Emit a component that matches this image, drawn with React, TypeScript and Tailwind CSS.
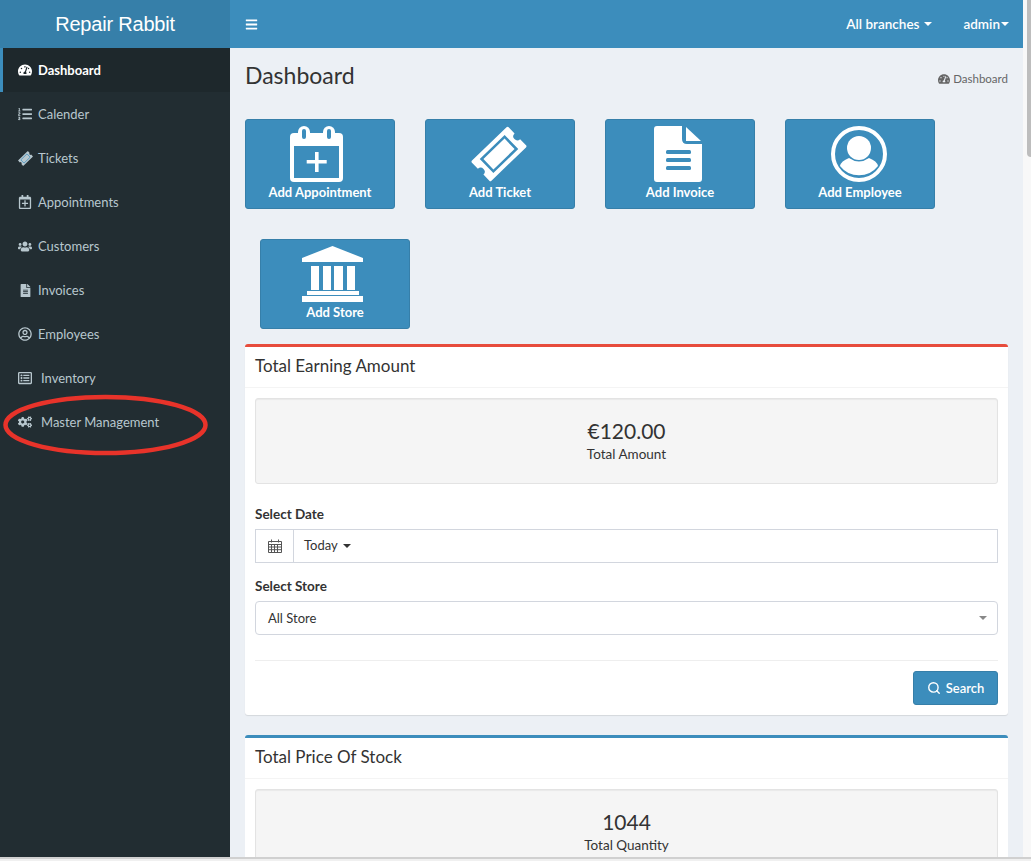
import type { ReactNode } from 'react'
import { FaBars, FaCogs, FaFileAlt, FaListOl, FaRegCalendarPlus, FaRegListAlt, FaRegUserCircle, FaTachometerAlt, FaUsers } from 'react-icons/fa'
import { Search } from 'lucide-react'

function TicketIcon({ className }: { className?: string }) {
  return (
    <svg viewBox="0 0 56 56" className={className}>
      <g transform="translate(28 28) rotate(-44)">
        <path
          fill="currentColor"
          d="M-24 -14 H24 Q25.5 -14 25.5 -12.5 V-4 A4 4 0 0 0 25.5 4 V12.5 Q25.5 14 24 14 H-24 Q-25.5 14 -25.5 12.5 V4 A4 4 0 0 0 -25.5 -4 V-12.5 Q-25.5 -14 -24 -14 Z"
        />
        <rect x="-16" y="-8.5" width="32" height="17" fill="none" stroke="#3c8dbc" strokeWidth="2.6" />
      </g>
    </svg>
  )
}

function CalendarPlusIcon() {
  return (
    <svg viewBox="0 0 53 56" className="mr-2 h-14 w-[53px] text-white">
      <path fill="currentColor" d="M4 7 H49 Q53 7 53 11 V52 Q53 56 49 56 H4 Q0 56 0 52 V11 Q0 7 4 7 Z" />
      <rect x="4" y="20" width="45" height="32" fill="#3c8dbc" />
      <rect x="8" y="0" width="12" height="15" rx="6" fill="currentColor" />
      <rect x="33" y="0" width="12" height="15" rx="6" fill="currentColor" />
      <rect x="12" y="3" width="4" height="10" rx="2" fill="#3c8dbc" />
      <rect x="37" y="3" width="4" height="10" rx="2" fill="#3c8dbc" />
      <path fill="currentColor" d="M25 26 H28.6 V34 H36.7 V37.6 H28.6 V46 H25 V37.6 H16.7 V34 H25 Z" />
    </svg>
  )
}

function InvoiceIcon() {
  return (
    <svg viewBox="0 0 49 56" className="mr-1 h-14 w-[49px] text-white">
      <path fill="currentColor" d="M3 0 H28 V13 Q28 18 33 18 H48 V53 Q48 56 45 56 H3 Q0 56 0 53 V3 Q0 0 3 0 Z" />
      <path fill="currentColor" d="M32 1 L47 15 H32 Z" />
      <rect x="12" y="24" width="25" height="4" rx="1.5" fill="#3c8dbc" />
      <rect x="12" y="32" width="25" height="4" rx="1.5" fill="#3c8dbc" />
      <rect x="12" y="40" width="25" height="4" rx="1.5" fill="#3c8dbc" />
    </svg>
  )
}

function EmployeeIcon() {
  return (
    <svg viewBox="0 0 56 56" className="mr-[2px] h-14 w-14 text-white">
      <circle cx="28" cy="28" r="26" fill="none" stroke="currentColor" strokeWidth="4" />
      <circle cx="28" cy="22" r="12" fill="currentColor" />
      <path fill="currentColor" d="M9 40 Q10 35 18 32 Q28 39 38 32 Q46 35 47 40 A24 24 0 0 1 9 40 Z" />
    </svg>
  )
}

function BankIcon() {
  return (
    <svg viewBox="0 0 61 56" className="mr-[6px] h-14 w-[61px] text-white">
      <path
        fill="currentColor"
        d="M30.5 0 L61 12 V16 H0 V12 Z M9 20 H17 V44 H9 Z M21 20 H29 V44 H21 Z M32 20 H41 V44 H32 Z M45 20 H53 V44 H45 Z M5 45 H57 V49 H5 Z M0 50 H61 V56 H0 Z"
      />
    </svg>
  )
}

function Caret({ className }: { className?: string }) {
  return <span className={`inline-block h-0 w-0 border-x-4 border-t-4 border-x-transparent border-t-current ${className ?? ''}`} />
}

function QuickAction({ icon, label }: { icon: ReactNode; label: string }) {
  return (
    <button className="flex h-[90px] w-[150px] flex-col items-center rounded-[3px] border border-[#367fa9] bg-[#3c8dbc] pt-[6px] text-[13px] font-bold leading-5 text-white">
      {icon}
      <span>{label}</span>
    </button>
  )
}

function NavItem({ icon, label, active, gap }: { icon: ReactNode; label: string; active?: boolean; gap?: boolean }) {
  return (
    <div
      className={`flex h-11 items-center border-l-[3px] pl-[15px] text-[13px] ${
        active ? 'border-[#3c8dbc] bg-[#1e282c] font-bold text-white' : 'border-transparent text-[#b8c7ce]'
      }`}
    >
      <span className="flex w-[14px] justify-center">{icon}</span>
      <span className={`pt-[2px] ${gap ? 'ml-[9px]' : 'ml-[6px]'}`}>{label}</span>
    </div>
  )
}

function Well({ value, label }: { value: string; label: string }) {
  return (
    <div className="flex h-[86px] flex-col items-center rounded-[3px] border border-[#e3e3e3] bg-[#f5f5f5] pt-[15px] shadow-[inset_0_1px_1px_rgba(0,0,0,0.05)]">
      <div className="text-[21px] leading-[33px]">{value}</div>
      <div className="text-[13.5px] leading-[14px]">{label}</div>
    </div>
  )
}

export default function App() {
  return (
    <div className="flex h-[861px] w-[1031px] flex-col overflow-hidden bg-[#f8f8f8] font-['Lato','Noto_Sans',sans-serif] text-[#333]">
      <div className="flex min-h-0 flex-1">
        <aside className="flex w-[230px] shrink-0 flex-col bg-[#222d32]">
          <div className="flex h-12 items-center justify-center bg-[#367fa9] font-['Liberation_Sans',sans-serif] text-xl tracking-[-0.2px] text-white">
            Repair Rabbit
          </div>
          <NavItem active label="Dashboard" icon={<FaTachometerAlt size={14} />} />
          <NavItem label="Calender" icon={<FaListOl size={14} />} />
          <NavItem label="Tickets" icon={<TicketIcon className="h-[15px] w-[15px] shrink-0" />} />
          <NavItem label="Appointments" icon={<FaRegCalendarPlus size={14} />} />
          <NavItem label="Customers" icon={<FaUsers size={15} />} />
          <NavItem label="Invoices" icon={<FaFileAlt size={13} />} />
          <NavItem label="Employees" icon={<FaRegUserCircle size={14} />} />
          <NavItem gap label="Inventory" icon={<FaRegListAlt size={14} />} />
          <NavItem gap label="Master Management" icon={<FaCogs size={16} />} />
        </aside>

        <main className="flex min-w-0 flex-1 flex-col bg-[#ecf0f5]">
          <header className="flex h-12 shrink-0 items-center bg-[#3c8dbc] text-[13.5px] text-white">
            <FaBars size={13} className="ml-[15px]" />
            <div className="ml-auto flex items-center">
              <span className="font-semibold">All branches</span>
              <Caret className="ml-[5px]" />
              <span className="ml-[31px] font-semibold">admin</span>
              <Caret className="ml-[1px] mr-[14px]" />
            </div>
          </header>

          <div className="flex h-[57px] shrink-0 items-center justify-between px-[15px]">
            <h1 className="relative top-[-1px] text-[23px]">Dashboard</h1>
            <div className="relative top-[2px] flex items-center text-[11.5px] text-[#666]">
              <FaTachometerAlt size={12} className="mr-[3px]" />
              Dashboard
            </div>
          </div>

          <div className="px-[15px] pt-[14px]">
            <div className="flex gap-[30px]">
              <QuickAction icon={<CalendarPlusIcon />} label="Add Appointment" />
              <QuickAction icon={<TicketIcon className="mr-[3px] h-14 w-14 text-white" />} label="Add Ticket" />
              <QuickAction icon={<InvoiceIcon />} label="Add Invoice" />
              <QuickAction icon={<EmployeeIcon />} label="Add Employee" />
            </div>
            <div className="mt-[30px] pl-[15px]">
              <QuickAction icon={<BankIcon />} label="Add Store" />
            </div>

            <section className="mt-[15px] h-[371px] rounded-[3px] border-t-[3px] border-[#e74c3c] bg-white shadow-[0_1px_1px_rgba(0,0,0,0.1)]">
              <div className="flex h-[41px] items-center border-b border-[#f4f4f4] px-[10px] pb-[2px] text-[17px]">Total Earning Amount</div>
              <div className="p-[10px]">
                <Well value="€120.00" label="Total Amount" />
                <div className="mt-5 text-[13.5px] font-bold leading-5">Select Date</div>
                <div className="mt-[5px] flex h-[34px] border border-[#d2d6de] text-[13px]">
                  <div className="flex w-[38px] items-center justify-center border-r border-[#d2d6de]">
                    <svg viewBox="0 0 14 14" className="h-[14px] w-[14px] text-[#555]" fill="none" stroke="currentColor" strokeWidth="1">
                      <path d="M.5 2.5h13v11H.5zM.5 5.5h13M.5 8h13M.5 10.7h13M3.5 5.5v8M6.5 5.5v8M9.5 5.5v8M3.5 .5v3M10.5 .5v3" />
                    </svg>
                  </div>
                  <div className="flex items-center pl-[10px]">
                    Today
                    <Caret className="ml-[5px]" />
                  </div>
                </div>
                <div className="mt-[13px] text-[13.5px] font-bold leading-5">Select Store</div>
                <div className="mt-[5px] flex h-[34px] items-center justify-between rounded border border-[#d2d6de] pl-3 pr-[10px] text-[13px]">
                  <span className="pt-[2px]">All Store</span>
                  <Caret className="text-[#888]" />
                </div>
                <div className="mt-[25px] border-t border-[#eee]" />
                <div className="mt-[10px] flex justify-end">
                  <button className="flex h-[34px] w-[85px] items-center justify-center gap-[5px] rounded-[3px] border border-[#367fa9] bg-[#3c8dbc] text-[13px] font-semibold text-white">
                    <Search size={14} strokeWidth={2.4} />
                    <span className="pt-[2px]">Search</span>
                  </button>
                </div>
              </div>
            </section>

            <section className="mt-5 rounded-[3px] border-t-[3px] border-[#3c8dbc] bg-white">
              <div className="flex h-[41px] items-center border-b border-[#f4f4f4] px-[10px] pb-[2px] text-[17px]">Total Price Of Stock</div>
              <div className="p-[10px]">
                <Well value="1044" label="Total Quantity" />
              </div>
            </section>
          </div>
        </main>

        <div className="relative w-2 shrink-0">
          <div className="absolute right-0 top-0 h-[157px] w-1 rounded-bl-sm bg-[#bdbdbd]" />
        </div>
      </div>
      <div className="h-1 shrink-0 border-t-2 border-[#d0d0d0] bg-[#f0f0f0]" />

      {/* hand drawn marker around the menu item */}
      <svg className="absolute left-0 top-[390px] h-[70px] w-[215px]" viewBox="0 0 215 70" fill="none">
        <ellipse cx="105.5" cy="35" rx="100" ry="28" stroke="#e8332a" strokeWidth="4.5" />
      </svg>
    </div>
  )
}
